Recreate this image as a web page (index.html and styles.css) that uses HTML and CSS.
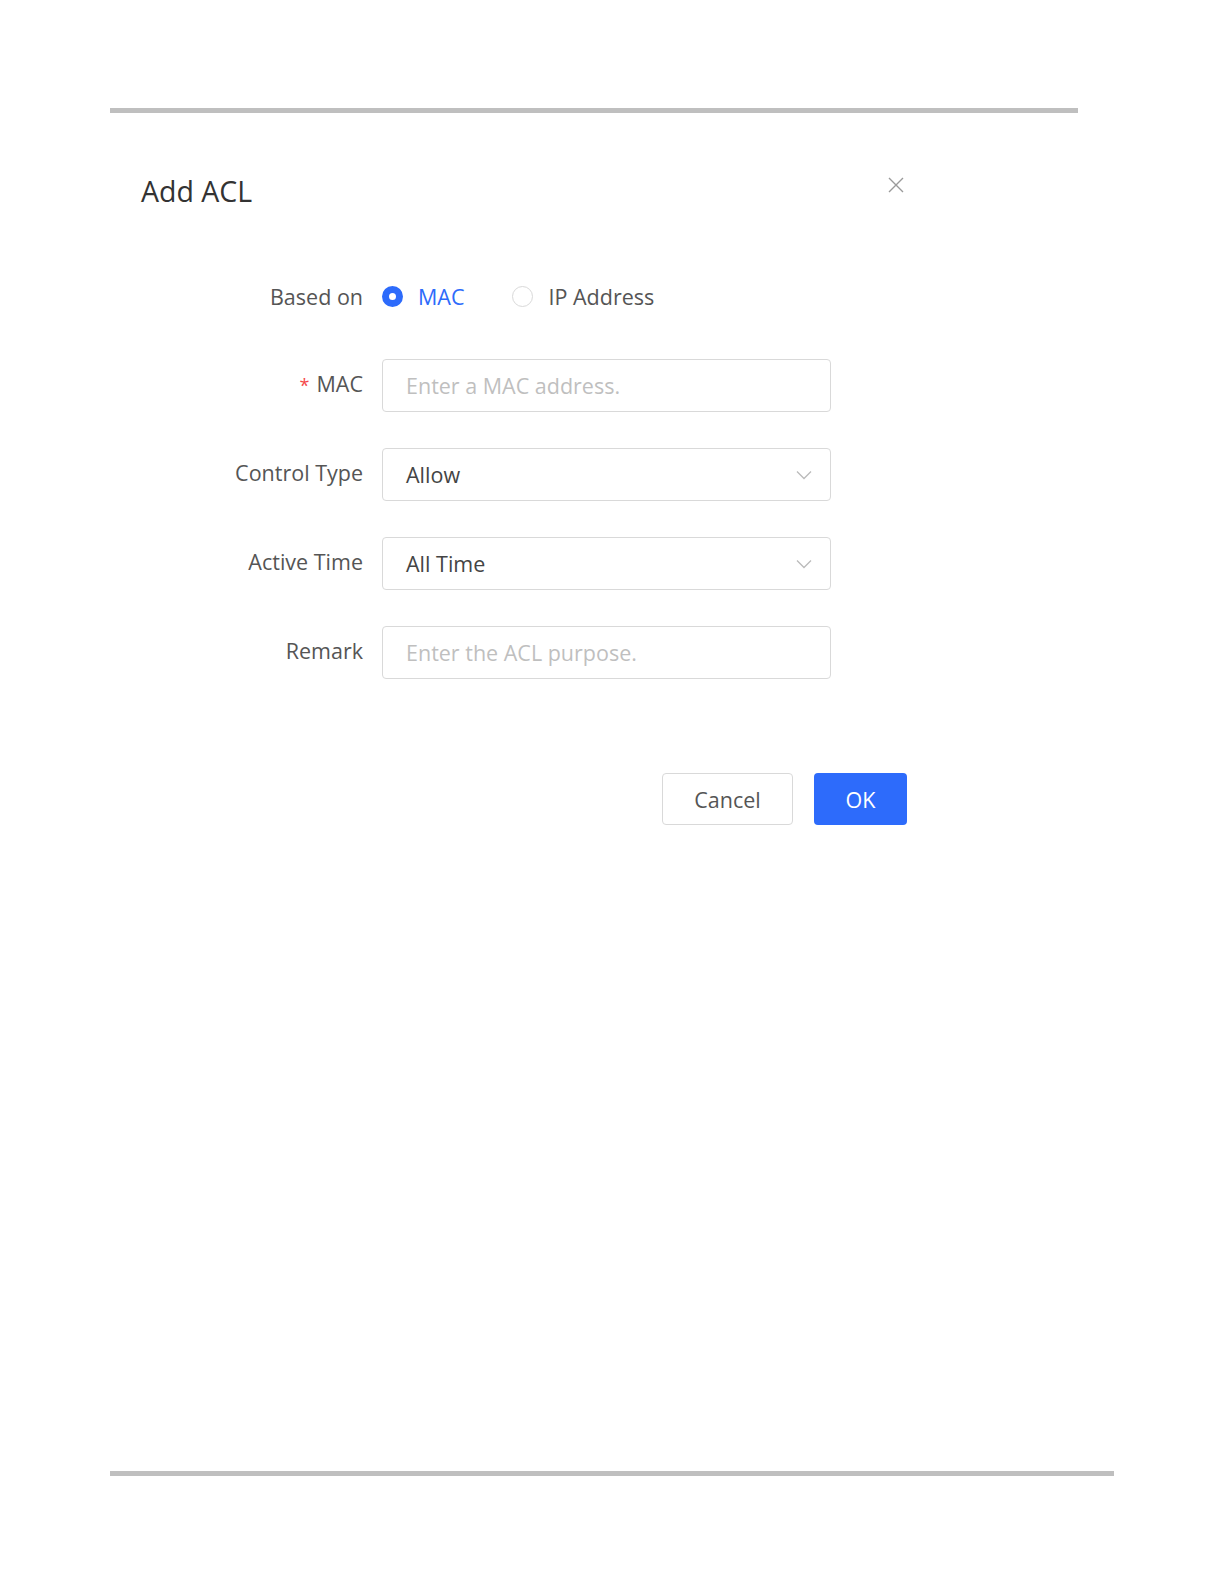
FILE: index.html
```html
<!DOCTYPE html>
<html>
<head>
<meta charset="utf-8">
<link rel="stylesheet" href="styles.css">
</head>
<body>
<div class="page">
  <div class="rule rule-top"></div>
  <div class="dialog">
    <div class="header">
      <div class="title">Add ACL</div>
      <div class="close">
        <svg width="18" height="18" viewBox="0 0 18 18"><path d="M2 2 L16 16 M16 2 L2 16" stroke="#9a9a9a" stroke-width="1.4" fill="none"/></svg>
      </div>
    </div>
    <div class="form">
      <div class="row">
        <div class="label label-radio">Based on</div>
        <div class="control radios">
          <div class="radio checked"><span class="dot"></span><span class="rtext">MAC</span></div>
          <div class="radio"><span class="dot"></span><span class="rtext">IP Address</span></div>
        </div>
      </div>
      <div class="row">
        <div class="label"><span class="req">*</span>MAC</div>
        <div class="control"><div class="input placeholder">Enter a MAC address.</div></div>
      </div>
      <div class="row">
        <div class="label">Control Type</div>
        <div class="control"><div class="input select"><span>Allow</span><svg class="chev" width="16" height="10" viewBox="0 0 16 10"><path d="M1 1.5 L8 8.5 L15 1.5" stroke="#bbbbbb" stroke-width="1.3" fill="none"/></svg></div></div>
      </div>
      <div class="row">
        <div class="label">Active Time</div>
        <div class="control"><div class="input select"><span>All Time</span><svg class="chev" width="16" height="10" viewBox="0 0 16 10"><path d="M1 1.5 L8 8.5 L15 1.5" stroke="#bbbbbb" stroke-width="1.3" fill="none"/></svg></div></div>
      </div>
      <div class="row">
        <div class="label">Remark</div>
        <div class="control"><div class="input placeholder">Enter the ACL purpose.</div></div>
      </div>
    </div>
    <div class="footer">
      <div class="btn btn-default">Cancel</div>
      <div class="btn btn-primary">OK</div>
    </div>
  </div>
  <div class="rule rule-bottom"></div>
</div>
</body>
</html>
```

FILE: styles.css
```css
html, body {
  margin: 0;
  padding: 0;
  background: #ffffff;
}
body {
  font-family: "Open Sans", "Noto Sans", Arial, sans-serif;
  color: #555555;
}
.page {
  width: 1224px;
  height: 1584px;
  padding-top: 108px;
  padding-left: 110px;
  box-sizing: border-box;
}
.rule {
  height: 5px;
  background: #bfbfbf;
}
.rule-top {
  width: 968px;
}
.rule-bottom {
  width: 1004px;
}
.dialog {
  width: 821px;
  height: 1358px;
  box-sizing: border-box;
  padding-top: 60px;
}
.header {
  display: flex;
  justify-content: space-between;
  align-items: flex-start;
  padding-left: 31px;
  padding-right: 26px;
  height: 97px;
}
.title {
  font-size: 28.5px;
  line-height: 36px;
  color: #333333;
}
.close {
  margin-top: 3px;
  width: 18px;
  height: 18px;
}
.close svg {
  display: block;
}
.form {
  display: flex;
  flex-direction: column;
  gap: 36px;
}
.row {
  display: flex;
  align-items: center;
  height: 53px;
}
.label {
  width: 253px;
  text-align: right;
  font-size: 21.5px;
  color: #555555;
  padding-right: 19px;
  padding-bottom: 5px;
}
.label-radio {
  padding-bottom: 0;
}
.req {
  color: #f5484b;
  margin-right: 7px;
  font-size: 18px;
}
.control {
  width: 449px;
}
.radios {
  display: flex;
  align-items: center;
  gap: 48px;
}
.radio {
  display: flex;
  align-items: center;
  gap: 15px;
  font-size: 21.5px;
  color: #555555;
}
.radio .dot {
  width: 21px;
  height: 21px;
  border-radius: 50%;
  border: 1px solid #d9d9d9;
  box-sizing: border-box;
  background: #fff;
  display: inline-block;
}
.radio.checked .dot {
  border: 7px solid #2d6bfb;
  background: #ffffff;
}
.radio.checked .rtext {
  color: #2d6bfb;
}
.input {
  height: 53px;
  border: 1px solid #d9d9d9;
  border-radius: 4px;
  box-sizing: border-box;
  padding: 0 18px 0 23px;
  display: flex;
  align-items: center;
  justify-content: space-between;
  font-size: 21.5px;
  color: #444444;
}
.input.placeholder {
  color: #bfbfbf;
}
.chev {
  display: block;
}
.footer {
  display: flex;
  justify-content: flex-end;
  gap: 21px;
  margin-top: 94px;
  padding-right: 24px;
}
.btn {
  height: 52px;
  box-sizing: border-box;
  border-radius: 4px;
  display: flex;
  align-items: center;
  justify-content: center;
  font-size: 21.5px;
}
.btn-default {
  width: 131px;
  border: 1px solid #d9d9d9;
  color: #555555;
  background: #fff;
}
.btn-primary {
  width: 93px;
  background: #2d6bfb;
  color: #ffffff;
}
```
